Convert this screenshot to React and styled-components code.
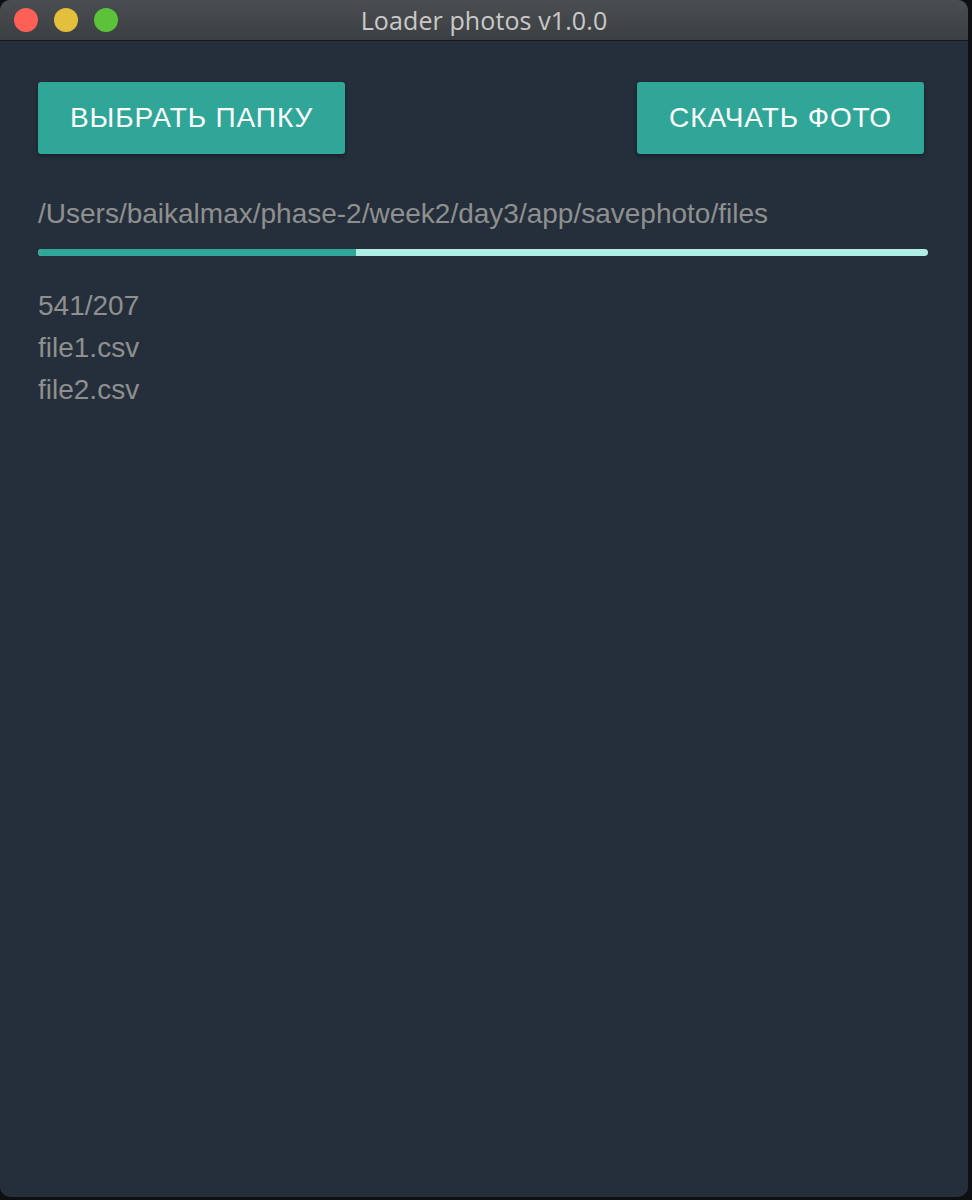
import styled, { createGlobalStyle } from "styled-components";

const GlobalStyle = createGlobalStyle`
  html, body {
    margin: 0;
    padding: 0;
    background: #0e0f10;
  }
`;

// Window frame

const Window = styled.div`
  width: 968px;
  height: 1197px;
  display: flex;
  flex-direction: column;
  background: #242f3b;
  border-radius: 10px;
  overflow: hidden;
  font-family: "Liberation Sans", Arial, sans-serif;
`;

const TitleBar = styled.div`
  position: relative;
  height: 40px;
  flex-shrink: 0;
  display: flex;
  align-items: center;
  justify-content: center;
  background: linear-gradient(#4b4e51, #3c3f42);
  border-bottom: 1px solid #151719;
`;

const Lights = styled.div`
  position: absolute;
  left: 14px;
  top: 8px;
  display: flex;
  gap: 16px;
`;

const Light = styled.span`
  width: 24px;
  height: 24px;
  border-radius: 50%;
  background: ${(props) => props.color};
`;

const Title = styled.div`
  color: #c9c9c9;
  font-family: "Open Sans", "Liberation Sans", sans-serif;
  font-size: 25px;
  letter-spacing: 0.1px;
`;

// Content

const Content = styled.div`
  flex: 1;
  padding: 41px 40px 0 38px;
`;

const Top = styled.div`
  display: flex;
  justify-content: space-between;
  padding-right: 4px;
`;

const Button = styled.button`
  height: 72px;
  padding: 0 32px;
  border: none;
  border-radius: 3px;
  background: #2fa698;
  color: #ffffff;
  font-family: "Liberation Sans", Arial, sans-serif;
  font-size: 28px;
  letter-spacing: 0.9px;
  box-shadow: 0 2px 4px rgba(0, 0, 0, 0.35);
  cursor: pointer;
`;

const Path = styled.div`
  margin-top: 44px;
  color: #8f8f8f;
  font-size: 28px;
  line-height: 32px;
`;

const Progress = styled.div`
  margin-top: 19px;
  height: 7px;
  border-radius: 4px;
  background: #aeeee4;
  overflow: hidden;
`;

const Bar = styled.div`
  height: 100%;
  background: #2fa698;
`;

const List = styled.div`
  margin-top: 29px;
  display: flex;
  flex-direction: column;
`;

const Item = styled.div`
  color: #8f8f8f;
  font-size: 28px;
  line-height: 42px;
`;

const App = () => {
  const done = 318 / 890;
  return (
    <>
      <GlobalStyle />
      <Window>
        <TitleBar>
          <Lights>
            <Light color="#fe5f57" />
            <Light color="#e3bf3b" />
            <Light color="#5bc23a" />
          </Lights>
          <Title>Loader photos v1.0.0</Title>
        </TitleBar>
        <Content>
          <Top>
            <Button>ВЫБРАТЬ ПАПКУ</Button>
            <Button>СКАЧАТЬ ФОТО</Button>
          </Top>
          <Path>/Users/baikalmax/phase-2/week2/day3/app/savephoto/files</Path>
          <Progress>
            <Bar style={{ width: `${done * 100}%` }} />
          </Progress>
          <List>
            <Item>541/207</Item>
            <Item>file1.csv</Item>
            <Item>file2.csv</Item>
          </List>
        </Content>
      </Window>
    </>
  );
};

export default App;
